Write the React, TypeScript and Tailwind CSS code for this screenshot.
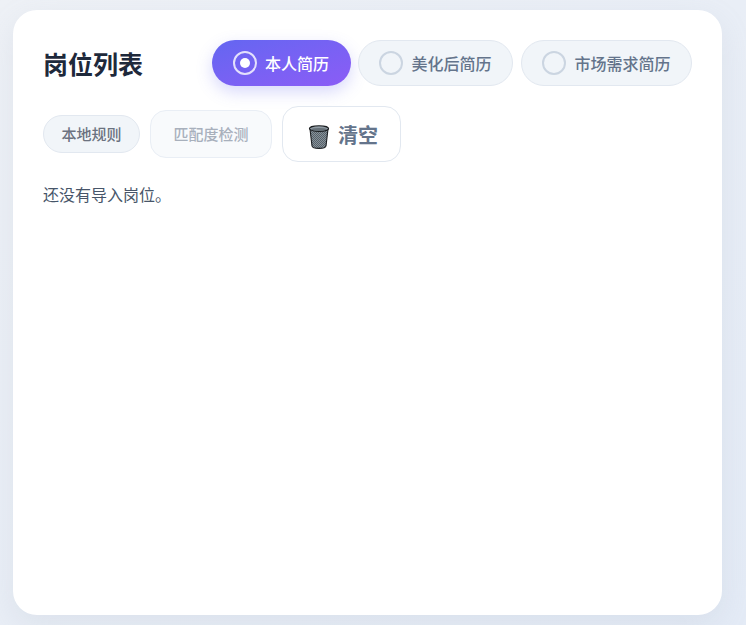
import React from 'react';

const FONT = "font-['Noto_Sans_CJK_SC','Noto_Sans',sans-serif]";

const TrashIcon = () => (
  <svg width="24" height="24" viewBox="0 0 24 24" className="mt-1 shrink-0">
    <defs>
      <pattern id="mesh" width="2" height="2" patternUnits="userSpaceOnUse">
        <rect width="2" height="2" fill="#87929a" />
        <rect width="1" height="1" fill="#566068" />
        <rect x="1" y="1" width="1" height="1" fill="#566068" />
      </pattern>
    </defs>
    <path d="M3 4 L5 21 Q5.5 23.4 12 23.4 Q18.5 23.4 19 21 L21 4 Z" fill="url(#mesh)" stroke="#1a1d20" strokeWidth="1.1" strokeLinejoin="round" />
    <ellipse cx="12" cy="3.6" rx="9.6" ry="2.8" fill="#8f9aa2" stroke="#1a1d20" strokeWidth="1.1" />
    <ellipse cx="12" cy="4.4" rx="7.4" ry="1.5" fill="#667078" />
  </svg>
);

const ResumeOption = ({label, active}: {label: string; active?: boolean}) => (
  <button
    className={
      active
        ? 'mr-[-1px] flex h-[46px] items-center gap-2 rounded-full bg-gradient-to-br from-[#6366f1] to-[#8b5cf6] pr-[22px] pl-[21px] text-base font-medium text-white shadow-[0_6px_16px_rgba(99,102,241,0.25)]'
        : 'flex h-[46px] items-center gap-2 rounded-full border border-[#e2e8f0] bg-[#f1f5f9] px-[20.5px] text-base font-medium text-[#64748b]'
    }>
    {active ? (
      <span className="flex h-6 w-6 items-center justify-center rounded-full border-2 border-white/80">
        <span className="h-2.5 w-2.5 rounded-full bg-white" />
      </span>
    ) : (
      <span className="h-6 w-6 rounded-full border-2 border-[#cbd5e1]" />
    )}
    {label}
  </button>
);

export default function App() {
  return (
    <div className={`${FONT} h-[625px] overflow-hidden bg-gradient-to-br from-[#eef1f6] to-[#e4ebf6] pt-2.5 pl-[13px] pr-6 pb-2.5`}>
      <div className="h-[605px] rounded-[24px] bg-white p-[30px] shadow-[0_10px_30px_rgba(148,163,184,0.15)]">
        <div className="flex items-center justify-between">
          <h2 className="pt-0.5 text-[25px] font-bold text-[#1e293b]">岗位列表</h2>
          <div className="flex gap-2">
            <ResumeOption label="本人简历" active />
            <ResumeOption label="美化后简历" />
            <ResumeOption label="市场需求简历" />
          </div>
        </div>
        <div className="mt-5 flex items-center gap-2.5">
          <button className="h-[38px] rounded-full border border-[#e2e8f0] bg-[#f1f5f9] px-[17.5px] text-[15px] font-medium text-[#6b7280]">
            本地规则
          </button>
          <button className="h-12 rounded-2xl border border-[#e9eef5] bg-[#f8fafc] px-[22.5px] text-[15px] font-medium text-[#a8b0bc]">
            匹配度检测
          </button>
          <button className="flex h-14 items-center gap-[7px] rounded-2xl border border-[#e2e8f0] bg-white pt-0.5 pr-[22px] pl-6 text-xl font-semibold text-[#64748b]">
            <TrashIcon />
            清空
          </button>
        </div>
        <p className="mt-[20px] text-base text-[#475569]">还没有导入岗位。</p>
      </div>
    </div>
  );
}
